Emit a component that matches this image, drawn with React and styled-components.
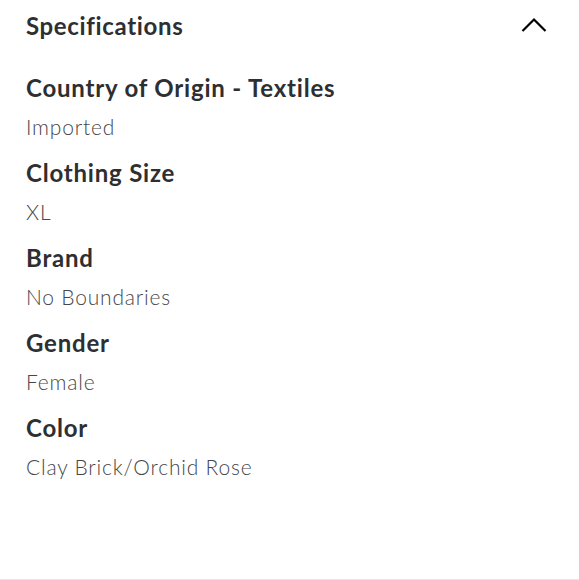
import React from 'react'
import styled, { createGlobalStyle } from 'styled-components'

const Global = createGlobalStyle`
    body {
        margin: 0;
        background: #fff;
        font-family: Lato, "Open Sans", sans-serif;
    }
`;
const Root = styled.div`
    height: 579px;
    border-bottom: 1px solid #e6e7e8;
    padding: 0 26px;
    color: #2e2f32;
`;
const Header = styled.div`
    height: 50px;
    display: flex;
    align-items: center;
    justify-content: space-between;
`;
const Title = styled.h2`
    margin: 0;
    font-size: 24px;
    font-weight: 700;
    letter-spacing: 0.65px;
`;
const Toggle = styled.button`
    border: none;
    background: none;
    padding: 0;
    margin-right: 6px;
    display: flex;
    cursor: pointer;
`;
const List = styled.dl`
    margin: 22px 0 0;
`;
const Item = styled.div`
    margin-bottom: 14px;
`;
const Label = styled.dt`
    font-size: 24px;
    line-height: 32px;
    font-weight: 700;
    letter-spacing: 0.8px;
`;
const Value = styled.dd`
    margin: 7px 0 0;
    font-size: 21px;
    line-height: 32px;
    font-weight: 300;
    letter-spacing: 0.8px;
    color: #46474a;
`;

const specs = [
    { label: 'Country of Origin - Textiles', value: 'Imported' },
    { label: 'Clothing Size', value: 'XL' },
    { label: 'Brand', value: 'No Boundaries' },
    { label: 'Gender', value: 'Female' },
    { label: 'Color', value: 'Clay Brick/Orchid Rose' },
]

const App = () => {
    return (
        <Root>
            <Global />
            <Header>
                <Title>Specifications</Title>
                <Toggle aria-label="collapse">
                    <svg width="26" height="16" viewBox="0 0 26 16" fill="none">
                        <path d="M1.5 14 L13 2.5 L24.5 14" stroke="#000" strokeWidth="2.2" />
                    </svg>
                </Toggle>
            </Header>
            <List>
                {specs.map((s) => (
                    <Item key={s.label}>
                        <Label>{s.label}</Label>
                        <Value>{s.value}</Value>
                    </Item>
                ))}
            </List>
        </Root>
    )
}

export default App
